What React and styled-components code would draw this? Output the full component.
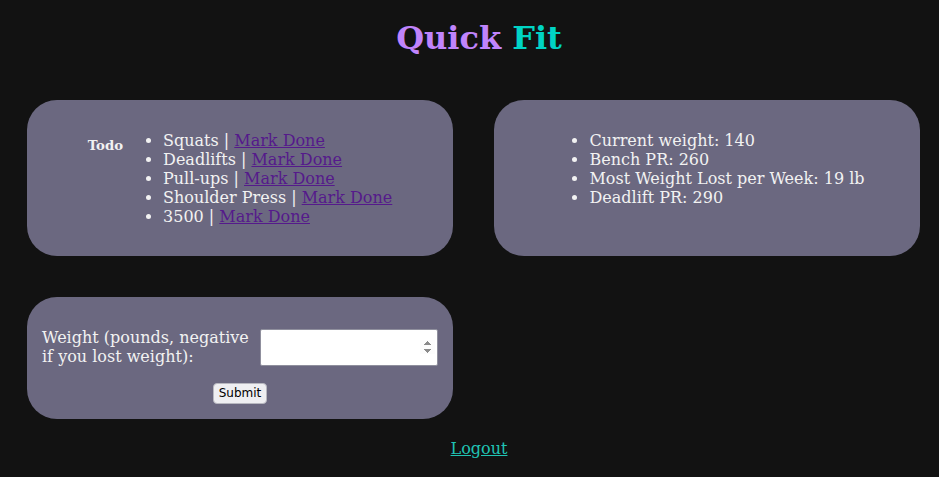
import React from 'react'
import styled, { createGlobalStyle } from 'styled-components'

const GlobalStyle = createGlobalStyle`
	body {
		margin: 8px;
		background: #121212;
		color: #f2f2f2;
		font-family: 'DejaVu Serif', serif;
	}
`

const todos = ['Squats', 'Deadlifts', 'Pull-ups', 'Shoulder Press', '3500']
const stats = [
	'Current weight: 140',
	'Bench PR: 260',
	'Most Weight Lost per Week: 19 lb',
	'Deadlift PR: 290',
]

const App = () => {
	return (
		<>
			<GlobalStyle />
			<Page>
				<Title>
					<Quick>Quick</Quick> <Fit>Fit</Fit>
				</Title>
				<Grid>
					<Card>
						<TodoLabel>Todo</TodoLabel>
						<List>
							{todos.map((t) => (
								<li key={t}>
									{t} | <MarkLink href="#">Mark Done</MarkLink>
								</li>
							))}
						</List>
					</Card>
					<Card>
						<List>
							{stats.map((s) => (
								<li key={s}>{s}</li>
							))}
						</List>
					</Card>
					<FormCard>
						<Row>
							<Label htmlFor="weight">Weight (pounds, negative if you lost weight):</Label>
							<NumberInput id="weight" type="number" />
						</Row>
						<SubmitButton type="button">Submit</SubmitButton>
					</FormCard>
				</Grid>
				<Footer>
					<LogoutLink href="#">Logout</LogoutLink>
				</Footer>
			</Page>
		</>
	)
}

const Page = styled.div`
	padding-left: 19px;
`
const Title = styled.h1`
	font-size: 32px;
	font-weight: bold;
	text-align: center;
	margin: 11px 0 43px;
`
const Quick = styled.span`
	color: #c084fc;
`
const Fit = styled.span`
	color: #00d4c4;
`
const Grid = styled.div`
	display: grid;
	grid-template-columns: 426px 426px;
	gap: 41px;
`
const Card = styled.div`
	display: flex;
	justify-content: center;
	align-items: flex-start;
	background: #6b6880;
	border-radius: 30px;
	padding: 14.5px 0;
`
const TodoLabel = styled.h5`
	font-size: 13.28px;
	font-weight: bold;
	margin: 23px 0;
`
const List = styled.ul`
	margin: 16px 0;
	padding-left: 40px;
	font-size: 16px;
	line-height: 19px;
`
const MarkLink = styled.a`
	color: #551a8b;
`
const FormCard = styled.div`
	grid-column: 1;
	background: #6b6880;
	border-radius: 30px;
	padding: 15px;
	display: flex;
	flex-direction: column;
	align-items: center;
`
const Row = styled.div`
	display: flex;
	align-items: center;
	gap: 11px;
	margin: 16px 0 17px;
	width: 100%;
`
const Label = styled.label`
	font-size: 16px;
	line-height: 19px;
	flex: 1;
`
const NumberInput = styled.input`
	width: 178px;
	height: 37px;
	box-sizing: border-box;
	padding: 1px 2px;
	border: 1px solid #8f8f9d;
	border-radius: 2px;
	background: #fff;
	&::-webkit-inner-spin-button {
		opacity: 1;
	}
`
const SubmitButton = styled.button`
	font-family: 'DejaVu Sans', sans-serif;
	font-size: 12px;
	line-height: 15px;
	padding: 2px 5px;
	border-radius: 4px;
	border: 1px solid #b8b8c0;
	background: #efeff2;
	color: #000;
`
const Footer = styled.div`
	text-align: center;
	margin-top: 20px;
	font-size: 16px;
	line-height: 19px;
`
const LogoutLink = styled.a`
	color: #20c4b4;
`

export default App
